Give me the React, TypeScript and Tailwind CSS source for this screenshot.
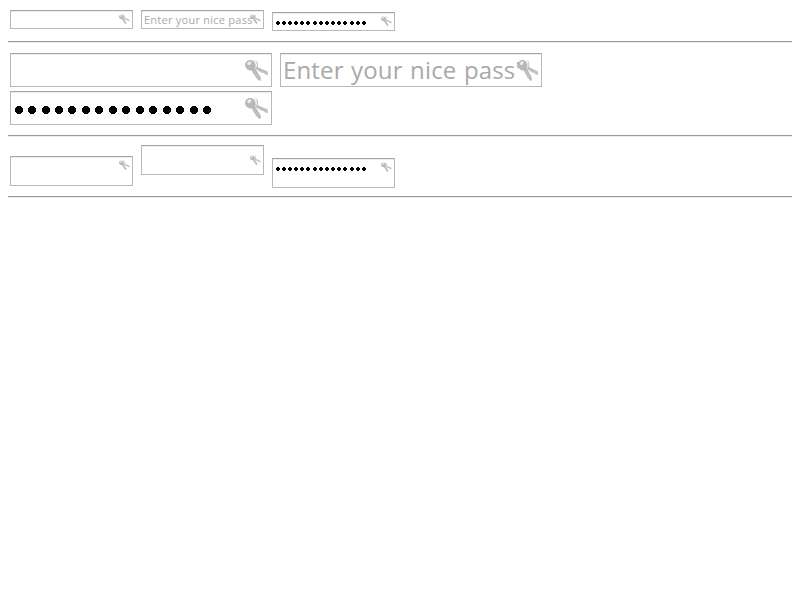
import type { ReactNode } from "react";

function Keys({ className }: { className: string }) {
  return (
    <svg viewBox="0 0 24 24" preserveAspectRatio="none" className={className} aria-hidden="true">
      <path d="M9.3 .9C12.6 1 14 4.6 12.6 8L22.7 12.6L23 15.9L20.2 15.6L18.9 14L16.8 13.8L11.2 10.6L9.8 8.2C11.7 5.5 11.4 2.8 9.3 .9Z" fill="#c0c0c0" />
      <path d="M9.5 .8C12 3.1 12.2 6.7 10.4 9" fill="none" stroke="white" strokeWidth=".8" />
      <path d="M5.4 1C8.6 1 10.8 3.5 10.5 6.8L10 9.2L15.8 18.5L15.7 21.7L13.1 21.2L12.3 19.4L10.7 18.7L10.2 16.6L9.1 15.9L6.8 11.5C3.2 12 .1 9.3 .1 6C.1 3.1 2.5 1 5.4 1Z" fill="#b8b8b8" />
      <ellipse cx="4.3" cy="4.3" rx="2.2" ry="1.6" transform="rotate(-35 4.3 4.3)" fill="#eeeeee" />
      <path d="M8.7 11.4L13.5 19" stroke="#cccccc" strokeWidth=".8" />
    </svg>
  );
}

const smallDots = [278, 284, 290, 296, 302, 308, 315, 321, 327, 333, 339, 345, 352, 358, 364];
const largeDots = [19, 32, 46, 59, 72, 86, 99, 113, 126, 140, 153, 167, 180, 194, 207];

function SmallDots() {
  return (
    <svg className="h-[17px] w-[100px]" viewBox="273 0 100 17" shapeRendering="crispEdges">
      {smallDots.map((x) => <path key={x} d={`M${x - 1} 8h2v1h1v2h-1v1h-2v-1h-1v-2h1z`} />)}
    </svg>
  );
}

function Field({ className, iconClass = "top-[3px] right-[2px] size-[11px]", children }: { className: string; iconClass?: string; children?: ReactNode }) {
  return (
    <div className={`relative shrink-0 overflow-hidden border border-[#b8b8b8] border-t-[#a5a5a5] bg-white shadow-[inset_0_1px_0_#eeeeee] ${className}`}>
      {children}
      <div className={`absolute ${iconClass}`}><Keys className="size-full" /></div>
    </div>
  );
}

function Rule() {
  return <hr className="h-[2px] border-0 border-t border-t-[#999999] bg-[#ededed]" />;
}

export default function App() {
  return (
    <main className="h-[600px] bg-white px-2 font-['Open_Sans',sans-serif]">
      <section className="flex h-[41px] items-start gap-2 pt-[10px] pl-[2px]">
        <Field className="h-[19px] w-[123px]" />
        <Field className="h-[19px] w-[123px]">
          <div className="pl-[2px] text-[11px] leading-[18px] tracking-[0.25px] whitespace-nowrap text-[#a9a9a9]">Enter your nice pass</div>
        </Field>
        <Field className="mt-[2px] h-[19px] w-[123px]"><SmallDots /></Field>
      </section>
      <Rule />
      <section className="flex h-[92px] flex-wrap content-start gap-x-2 gap-y-1 pt-[10px] pl-[2px]">
        <Field className="h-[34px] w-[262px]" iconClass="top-[5px] right-[2px] size-6" />
        <Field className="h-[34px] w-[262px]" iconClass="top-[5px] right-[2px] h-6 w-[21px]">
          <div className="pl-[2px] text-[24px] leading-[31px] tracking-[0.16px] [word-spacing:1px] whitespace-nowrap text-[#a9a9a9]">Enter your nice pass'</div>
        </Field>
        <div className="basis-full">
          <Field className="h-[34px] w-[262px]" iconClass="top-[5px] right-[2px] size-6">
            <svg className="h-8 w-[220px]" viewBox="11 0 220 32" shapeRendering="crispEdges">
              {largeDots.map((x) => <circle key={x} cx={x} cy="18" r="4.1" />)}
            </svg>
          </Field>
        </div>
      </section>
      <Rule />
      <section className="flex h-[59px] items-start gap-2 pt-[8px] pl-[2px]">
        <Field className="mt-[11px] h-[30px] w-[123px]" />
        <Field className="h-[30px] w-[123px]" iconClass="top-[9px] right-[2px] size-[11px]" />
        <Field className="mt-[13px] h-[30px] w-[123px]"><SmallDots /></Field>
      </section>
      <Rule />
    </main>
  );
}
